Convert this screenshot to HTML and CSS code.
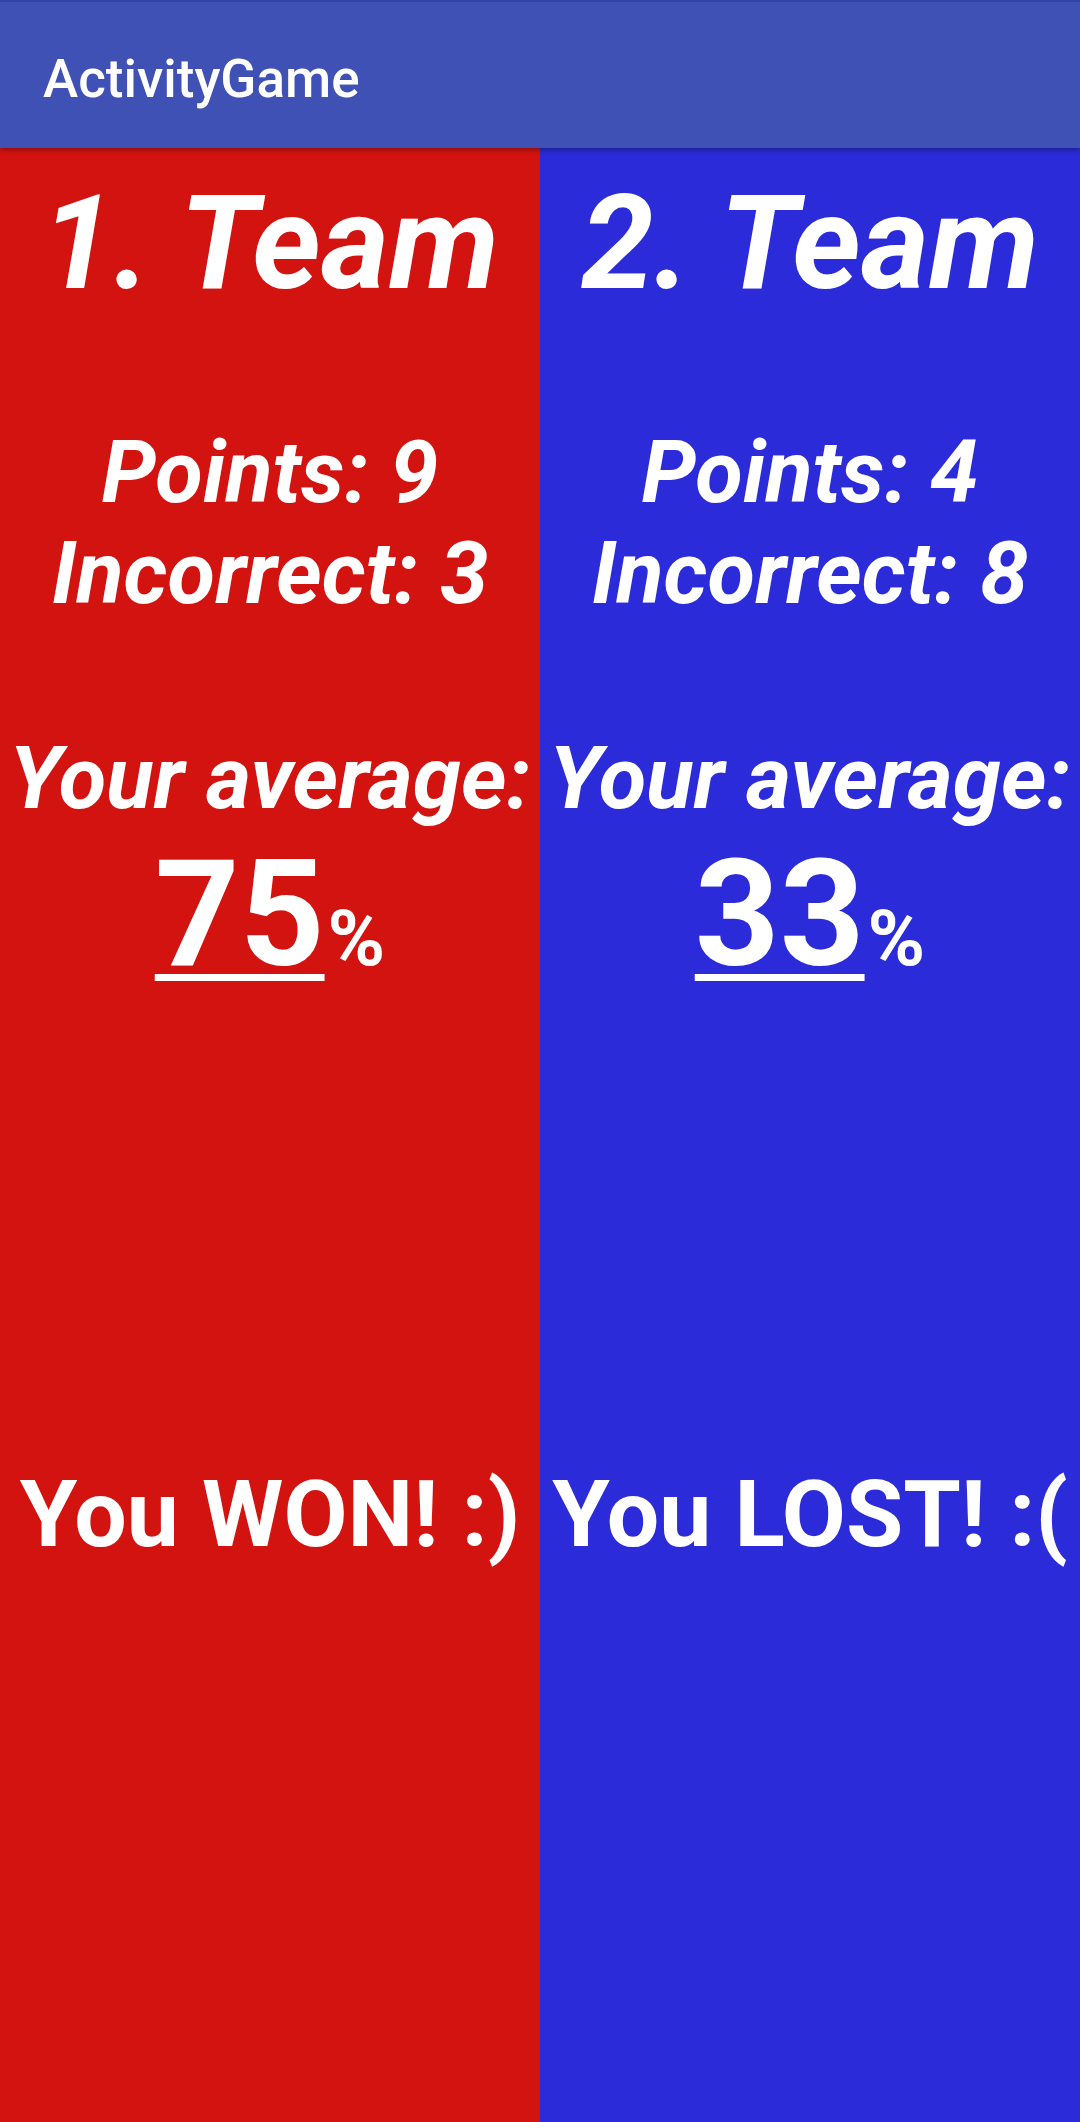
FILE: index.html
```html
<!DOCTYPE html>
<html>
<head>
<meta charset="utf-8">
<link rel="stylesheet" href="styles.css">
</head>
<body>
<header class="appbar"><span class="appbar-title">ActivityGame</span></header>
<main class="teams">
  <section class="team team-red">
    <h1 class="team-name">1. Team</h1>
    <div class="stats">
      <div class="stat">Points: 9</div>
      <div class="stat">Incorrect: 3</div>
    </div>
    <div class="avg-label">Your average:</div>
    <div class="avg-value"><span class="avg-num">75</span><span class="avg-pct">%</span></div>
    <div class="result">You WON! :)</div>
  </section>
  <section class="team team-blue">
    <h1 class="team-name">2. Team</h1>
    <div class="stats">
      <div class="stat">Points: 4</div>
      <div class="stat">Incorrect: 8</div>
    </div>
    <div class="avg-label">Your average:</div>
    <div class="avg-value"><span class="avg-num">33</span><span class="avg-pct">%</span></div>
    <div class="result">You LOST! :(</div>
  </section>
</main>
</body>
</html>
```
FILE: styles.css
```css
* { box-sizing: border-box; }
html, body { margin: 0; padding: 0; }
body {
  width: 1080px;
  height: 2122px;
  overflow: hidden;
  font-family: Roboto, "Liberation Sans", sans-serif;
  color: #fff;
  display: flex;
  flex-direction: column;
}
.appbar {
  position: relative;
  z-index: 2;
  height: 148px;
  flex: none;
  background: #3F51B5;
  border-top: 2px solid #3343a6;
  padding: 45px 0 0 43px;
  box-shadow: 0 2px 5px rgba(0,0,0,0.35);
}
.appbar-title {
  display: block;
  font-size: 53px;
  line-height: 64px;
  font-weight: 500;
}
.teams {
  flex: 1;
  display: grid;
  grid-template-columns: 540px 540px;
}
.team {
  display: flex;
  flex-direction: column;
  align-items: center;
  text-align: center;
}
.team-red { background: #D31310; }
.team-blue { background: #2B2BDA; }
.team-name {
  margin: 18px 0 0;
  font-size: 131px;
  line-height: 154px;
  font-weight: 700;
  font-style: italic;
}
.stats {
  margin-top: 102px;
}
.stat, .avg-label {
  font-size: 87px;
  line-height: 101px;
  font-weight: 700;
  font-style: italic;
  white-space: nowrap;
}
.avg-label { margin-top: 104px; }
.avg-value {
  font-size: 148px;
  line-height: 171px;
  height: 171px;
  font-weight: 700;
  white-space: nowrap;
}
.avg-num {
  text-decoration: underline;
  text-decoration-thickness: 7px;
  text-underline-offset: 9px;
}
.avg-pct {
  font-size: 78px;
  line-height: 80px;
  margin-left: 3px;
}
.result {
  margin-top: 462px;
  font-size: 93px;
  line-height: 106px;
  font-weight: 700;
  white-space: nowrap;
}
```
